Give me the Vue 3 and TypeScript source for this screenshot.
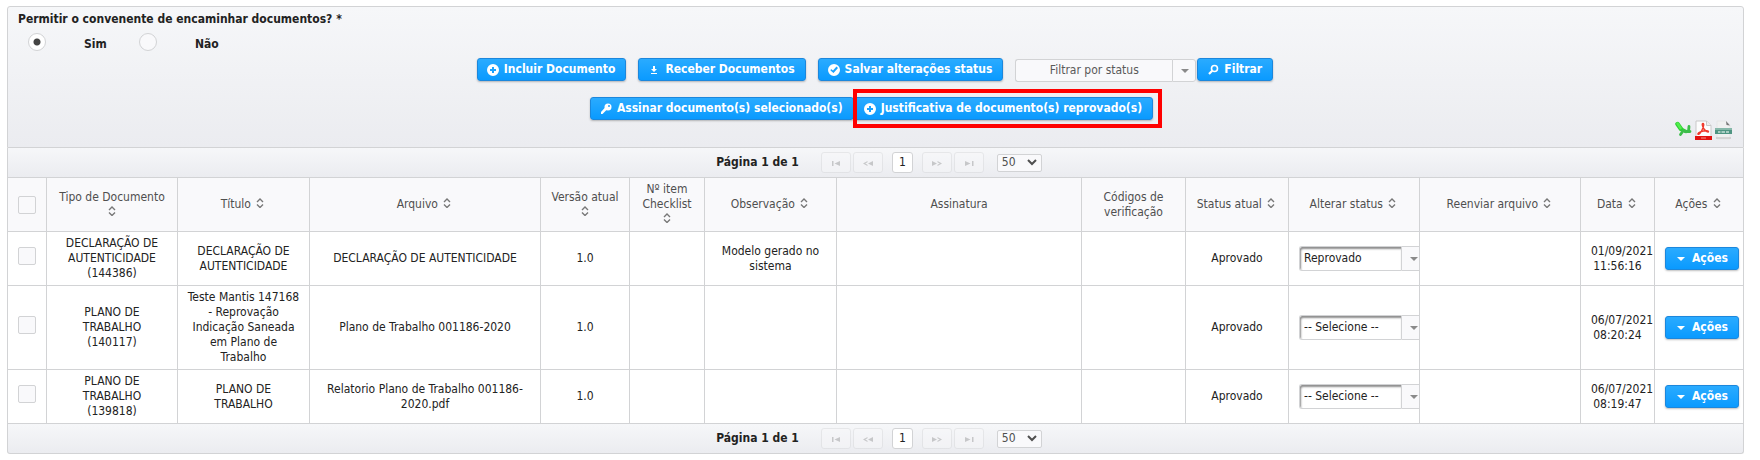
<script setup lang="ts">
import { ref } from 'vue'

interface Column {
  label: string
  width: number
  sortable: boolean
}

interface DocumentRow {
  id: number
  type: string
  title: string
  file: string
  version: string
  note: string
  status: string
  newStatus: string
  date: string
  time: string
}

const columns: Column[] = [
  { label: 'Tipo de Documento', width: 131, sortable: true },
  { label: 'Título', width: 132, sortable: true },
  { label: 'Arquivo', width: 231, sortable: true },
  { label: 'Versão atual', width: 89, sortable: true },
  { label: 'Nº item Checklist', width: 75, sortable: true },
  { label: 'Observação', width: 132, sortable: true },
  { label: 'Assinatura', width: 245, sortable: false },
  { label: 'Códigos de verificação', width: 104, sortable: false },
  { label: 'Status atual', width: 103, sortable: true },
  { label: 'Alterar status', width: 131, sortable: true },
  { label: 'Reenviar arquivo', width: 161, sortable: true },
  { label: 'Data', width: 74, sortable: true },
  { label: 'Ações', width: 89, sortable: true },
]

const rows = ref<DocumentRow[]>([
  {
    id: 144386, type: 'DECLARAÇÃO DE AUTENTICIDADE', title: 'DECLARAÇÃO DE AUTENTICIDADE',
    file: 'DECLARAÇÃO DE AUTENTICIDADE', version: '1.0', note: 'Modelo gerado no sistema',
    status: 'Aprovado', newStatus: 'Reprovado', date: '01/09/2021', time: '11:56:16',
  },
  {
    id: 140117, type: 'PLANO DE TRABALHO', title: 'Teste Mantis 147168 - Reprovação Indicação Saneada em Plano de Trabalho',
    file: 'Plano de Trabalho 001186-2020', version: '1.0', note: '',
    status: 'Aprovado', newStatus: '', date: '06/07/2021', time: '08:20:24',
  },
  {
    id: 139818, type: 'PLANO DE TRABALHO', title: 'PLANO DE TRABALHO',
    file: 'Relatorio Plano de Trabalho 001186-2020.pdf', version: '1.0', note: '',
    status: 'Aprovado', newStatus: '', date: '06/07/2021', time: '08:19:47',
  },
])

const allowForward = ref('sim')
const selected = ref<number[]>([])
const statusFilter = ref('')
const pageSize = ref('50')

const pagerIcons = {
  first: 'M2 6h1.500v5H2zM10 6v5L4.500 8.500z',
  prev: 'M11 6v5L6 8.500zM5.500 6 1 8.500l4.500 2.500V9.700L3.200 8.500l2.300-1.200z',
  next: 'M1 6v5l5-2.500zM6.500 6 11 8.500 6.500 11V9.700l2.300-1.200-2.300-1.200z',
  last: 'M9 6h1.500v5H9zM2 6v5l5.500-2.500z',
}
</script>

<template>
  <main class="panel">
    <header class="head">
      <fieldset class="question">
        <legend>Permitir o convenente de encaminhar documentos? *</legend>
        <div class="options">
          <label class="option"><input v-model="allowForward" type="radio" name="allow" value="sim" /><span>Sim</span></label>
          <label class="option"><input v-model="allowForward" type="radio" name="allow" value="nao" /><span>Não</span></label>
        </div>
      </fieldset>

      <div class="toolbar">
        <button type="button" class="btn">
          <svg class="icon" viewBox="0 0 16 16"><path fill-rule="evenodd" d="M8 2a6 6 0 1 0 0 12A6 6 0 0 0 8 2zM7 5h2v2h2v2H9v2H7V9H5V7h2z" /></svg>
          Incluir Documento
        </button>
        <button type="button" class="btn">
          <svg class="icon" viewBox="0 0 16 16"><path d="M7 4h2v3h2L8 10 5 7h2zM5 11h6v1H5z" /></svg>
          Receber Documentos
        </button>
        <button type="button" class="btn">
          <svg class="icon" viewBox="0 0 16 16"><path fill-rule="evenodd" d="M8 2a6 6 0 1 0 0 12A6 6 0 0 0 8 2zM5 7l2 1.500L10.500 4.500 12 6l-4.500 5L4.500 8.500z" /></svg>
          Salvar alterações status
        </button>
        <div class="filter">
          <div class="combo combo-filter">
            <select v-model="statusFilter" aria-label="Filtrar por status">
              <option value="">Filtrar por status</option>
              <option value="aprovado">Aprovado</option>
              <option value="reprovado">Reprovado</option>
            </select>
            <span class="trigger"><svg viewBox="0 0 8 4"><path d="M0 0h8L4 4z" /></svg></span>
          </div>
          <button type="button" class="btn">
            <svg class="icon" viewBox="0 0 16 16"><g fill="none" stroke="#fff"><circle cx="9.500" cy="6.500" r="3" stroke-width="1.600" /><path d="M7.200 8.800 4 12" stroke-width="2.200" /></g></svg>
            Filtrar
          </button>
        </div>
      </div>

      <div class="toolbar toolbar-second">
        <button type="button" class="btn">
          <svg class="icon" viewBox="0 0 16 16"><circle cx="10" cy="6" r="3.500" /><path d="M7.500 6 3 11v2h1.500l5-5z" /><circle cx="11" cy="5" r="1" fill="#219fff" /></svg>
          Assinar documento(s) selecionado(s)
        </button>
        <span class="highlight">
          <button type="button" class="btn">
            <svg class="icon" viewBox="0 0 16 16"><path fill-rule="evenodd" d="M8 2a6 6 0 1 0 0 12A6 6 0 0 0 8 2zM7 5h2v2h2v2H9v2H7V9H5V7h2z" /></svg>
            Justificativa de documento(s) reprovado(s)
          </button>
        </span>
      </div>

      <div class="exports">
        <a href="#" aria-label="Excel">
          <svg viewBox="0 0 17 20"><g fill="none" stroke-linecap="round"><path d="M2.500 4 6 9" stroke="#2fcf35" stroke-width="4.500" /><path d="m6 9 5 2.500" stroke="#2fcf35" stroke-width="3.500" /><path d="M2.500 3.500 5.500 8" stroke="#52ee4c" stroke-width="2.500" /><path d="M8 11 5.500 14.500M14 6.500l-.5 5M10 11.500h5" stroke="#3cbd4a" stroke-width="2.800" /></g></svg>
        </a>
        <a href="#" aria-label="PDF">
          <svg viewBox="0 0 17 20"><path d="M1 1h10.500L16 5.500V19H1z" fill="#fdfdfd" stroke="#c9c9c9" /><path d="M11.500 1v4.500H16" fill="#eee" stroke="#c9c9c9" /><path d="M8 3.500c1.500 0 .5 3.500-1 6.500s-3 5-4 4.200 3-2.700 5.500-3.200 5-.5 5 .6-3-.4-4.500-2.600S6.500 3.500 8 3.500z" fill="none" stroke="#f03a2c" stroke-width="1.400" /><path d="M0 16h17v4H0z" fill="#e2120f" /><path d="M6 18h5" stroke="#f5938c" /></svg>
        </a>
        <a href="#" aria-label="CSV">
          <svg viewBox="0 0 17 20"><path d="M2 1h9l4 4v14H2z" fill="#f0f0f0" stroke="#dedede" stroke-width=".5" /><path d="m11 1 4 4.500L11.500 5z" fill="#777" /><path d="M0 9.500h17V14H0z" fill="#4f9582" /><path d="M0 8h17v2H0z" fill="#86b8a9" /><path d="M3 12h2.500m1 0H10m1 0h3" stroke="#c6e0d8" stroke-width="1.600" /><path d="M1 18h15" stroke="#bbb" /></svg>
        </a>
      </div>
    </header>

    <nav class="pager" aria-label="Paginação superior">
      <span class="pager-text">Página 1 de 1</span>
      <span class="pager-group">
        <button type="button" disabled aria-label="Primeira"><svg viewBox="0 0 12 15"><path :d="pagerIcons.first" /></svg></button>
        <button type="button" disabled aria-label="Anterior"><svg viewBox="0 0 12 15"><path :d="pagerIcons.prev" /></svg></button>
      </span>
      <button type="button" class="page">1</button>
      <span class="pager-group">
        <button type="button" disabled aria-label="Próxima"><svg viewBox="0 0 12 15"><path :d="pagerIcons.next" /></svg></button>
        <button type="button" disabled aria-label="Última"><svg viewBox="0 0 12 15"><path :d="pagerIcons.last" /></svg></button>
      </span>
      <span class="size">
        <select v-model="pageSize" aria-label="Linhas por página"><option>10</option><option>20</option><option>50</option></select>
        <svg viewBox="0 0 10 7"><path d="m1 1 4 4 4-4" /></svg>
      </span>
    </nav>

    <table>
      <colgroup>
        <col class="col-check" />
        <col v-for="c in columns" :key="c.label" :style="{ width: c.width + 'px' }" />
      </colgroup>
      <thead>
        <tr>
          <th class="fixed"><input type="checkbox" class="check" aria-label="Selecionar todos" /></th>
          <th v-for="c in columns" :key="c.label" scope="col">
            {{ c.label }}
            <svg v-if="c.sortable" class="sort" viewBox="0 0 8 10"><path d="m1 4 3-3 3 3M1 6.500l3 3 3-3" /></svg>
          </th>
        </tr>
      </thead>
      <tbody>
        <tr v-for="r in rows" :key="r.id">
          <td class="fixed"><input v-model="selected" type="checkbox" class="check" :value="r.id" :aria-label="'Selecionar ' + r.id" /></td>
          <td class="fixed">{{ r.type }} ({{ r.id }})</td>
          <td>{{ r.title }}</td>
          <td>{{ r.file }}</td>
          <td>{{ r.version }}</td>
          <td></td>
          <td>{{ r.note }}</td>
          <td></td>
          <td></td>
          <td>{{ r.status }}</td>
          <td class="fixed clip">
            <div class="combo combo-row">
              <select v-model="r.newStatus" :aria-label="'Alterar status de ' + r.id">
                <option value="">-- Selecione --</option>
                <option>Aprovado</option>
                <option>Reprovado</option>
              </select>
              <span class="trigger"><svg viewBox="0 0 8 4"><path d="M0 0h8L4 4z" /></svg></span>
            </div>
          </td>
          <td></td>
          <td class="fixed">{{ r.date }} {{ r.time }}</td>
          <td class="fixed">
            <button type="button" class="btn">
              <svg class="icon" viewBox="0 0 16 16"><path d="M4 6h8l-4 4z" /></svg>
              Ações
            </button>
          </td>
        </tr>
      </tbody>
    </table>

    <nav class="pager pager-bottom" aria-label="Paginação inferior">
      <span class="pager-text">Página 1 de 1</span>
      <span class="pager-group">
        <button type="button" disabled aria-label="Primeira"><svg viewBox="0 0 12 15"><path :d="pagerIcons.first" /></svg></button>
        <button type="button" disabled aria-label="Anterior"><svg viewBox="0 0 12 15"><path :d="pagerIcons.prev" /></svg></button>
      </span>
      <button type="button" class="page">1</button>
      <span class="pager-group">
        <button type="button" disabled aria-label="Próxima"><svg viewBox="0 0 12 15"><path :d="pagerIcons.next" /></svg></button>
        <button type="button" disabled aria-label="Última"><svg viewBox="0 0 12 15"><path :d="pagerIcons.last" /></svg></button>
      </span>
      <span class="size">
        <select v-model="pageSize" aria-label="Linhas por página, rodapé"><option>10</option><option>20</option><option>50</option></select>
        <svg viewBox="0 0 10 7"><path d="m1 1 4 4 4-4" /></svg>
      </span>
    </nav>
  </main>
</template>

<style>
body {
  background: #fff;
}
</style>

<style scoped>
.panel,
.panel * {
  box-sizing: border-box;
}

.panel,
.panel button,
.panel select {
  font-family: "DejaVu Sans Condensed", "Noto Sans", sans-serif;
  font-size: 12px;
  line-height: 15px;
  color: #222;
}

.panel {
  margin: 6px 16px 0 7px;
}

svg {
  display: block;
  flex: none;
}

.head {
  padding: 5px 11px 7px 10px;
  border: 1px solid #d2d3d5;
  border-radius: 3px 3px 0 0;
  background: linear-gradient(#f6f7f9, #ebecf0);
}

.question {
  margin: 0;
  padding: 0;
  border: 0;
  font-weight: 700;
}

.question legend {
  padding: 0;
}

.options {
  display: flex;
  padding: 4px 0 0 10px;
}

.option {
  display: flex;
  width: 111px;
  height: 22px;
}

.option span {
  margin: 6px 0 0 38px;
}

.option input {
  appearance: none;
  width: 18px;
  height: 18px;
  margin: 2px 0 0;
  border: 1px solid #d2d3d5;
  border-radius: 50%;
  background: #f9f9fb;
}

.option input:checked {
  background: radial-gradient(circle, #444 3px, #fff 4px);
}

.toolbar {
  display: flex;
  justify-content: center;
  align-items: flex-start;
  gap: 12px;
  padding-top: 5px;
}

.toolbar-second {
  gap: 0;
  padding: 15px 7px 0 0;
}

.btn {
  display: flex;
  align-items: center;
  gap: 3px;
  height: 23px;
  margin: 0;
  padding: 0 10px 0 7px;
  border: 1px solid #1c87dc;
  border-radius: 3px;
  background: linear-gradient(#2aabff, #0a9aff);
  box-shadow: 0 1px 2px rgba(0, 0, 0, 0.25);
  white-space: nowrap;
}

.panel .btn {
  color: #fff;
  font-weight: 700;
}

.icon {
  width: 16px;
  height: 16px;
  fill: #fff;
}

.filter {
  display: flex;
  gap: 1px;
}

.combo {
  display: flex;
}

.combo select {
  appearance: none;
  flex: 1;
  min-width: 0;
  margin: 0;
  border: 1px solid #d2d3d5;
  border-right: 0;
  border-radius: 3px 0 0 3px;
}

.trigger {
  display: flex;
  align-items: center;
  border: 1px solid #d2d3d5;
  border-radius: 0 3px 3px 0;
  background: #f9f9fb;
}

.trigger svg {
  width: 8px;
  height: 4px;
  fill: #8a8a8a;
}

.combo-filter {
  width: 181px;
  height: 23px;
  margin-top: 1px;
}

.combo-filter select {
  background: #f9f9fb;
  color: #5a5a5a;
  text-align: center;
  text-align-last: center;
}

.combo-filter .trigger {
  width: 24px;
  padding-left: 8px;
}

.combo-row {
  width: 130px;
  height: 25px;
}

.combo-row select {
  padding: 0 4px;
  background: #fff;
  box-shadow: inset 1px 2px 2px #8e8e8e;
}

.combo-row .trigger {
  width: 28px;
  padding-left: 8px;
}

.highlight {
  position: relative;
}

.highlight::after {
  content: "";
  position: absolute;
  inset: -8px -9px -8px -1px;
  border: 4px solid #f00;
  pointer-events: none;
}

.exports {
  display: flex;
  justify-content: flex-end;
  gap: 3px;
}

.exports svg {
  width: 17px;
  height: 20px;
}

.pager {
  display: flex;
  justify-content: center;
  align-items: center;
  height: 29px;
  padding-left: 7px;
  border: solid #d2d3d5;
  border-width: 0 1px;
  background: linear-gradient(#f6f7f9, #ebecf0);
}

.pager-bottom {
  height: 30px;
  border-width: 0 1px 1px;
  border-radius: 0 0 3px 3px;
}

.pager-text {
  margin-right: 22px;
  font-weight: 700;
}

.pager-group {
  display: flex;
  gap: 2px;
}

.pager button {
  display: flex;
  align-items: center;
  justify-content: center;
  width: 30px;
  height: 21px;
  padding: 0;
  border: 1px solid #d2d3d5;
  border-radius: 3px;
  background: #f9f9fb;
}

.pager button:disabled {
  opacity: 0.4;
}

.pager button svg {
  width: 12px;
  height: 15px;
  fill: #8a8a8a;
}

.pager .page {
  width: 21px;
  margin: 0 9px;
  background: #fff;
}

.size {
  display: flex;
  align-items: center;
  justify-content: flex-end;
  width: 45px;
  height: 18px;
  margin-left: 13px;
  border: 1px solid #d2d3d5;
  border-radius: 2px;
  background: #f9f9fb;
}

.size select {
  appearance: none;
  flex: 1;
  min-width: 0;
  padding: 0 4px;
  border: 0;
  background: none;
  color: #4f4f4f;
}

.size svg {
  width: 10px;
  height: 7px;
  margin-right: 4px;
  fill: none;
  stroke: #4f4f4f;
  stroke-width: 2;
}

table {
  width: 100%;
  table-layout: fixed;
  border-collapse: collapse;
}

.col-check {
  width: 39px;
}

th,
td {
  padding: 4px 9px;
  border: 1px solid #d2d3d5;
  text-align: center;
  vertical-align: middle;
}

.fixed {
  padding: 4px 10px;
}

td {
  background: #fff;
}

th {
  height: 54px;
  background: #f9f9fb;
  color: #4f4f4f;
  font-weight: 400;
}

.sort {
  display: inline-block;
  width: 8px;
  height: 10px;
  margin: 0 2px;
  fill: none;
  stroke: #777;
  stroke-width: 1.4;
}

.check {
  appearance: none;
  display: block;
  width: 18px;
  height: 18px;
  margin: 0;
  border: 1px solid #d2d3d5;
  border-radius: 2px;
  background: #f9f9fb;
}

td .check {
  margin-bottom: 5px;
}

.clip {
  overflow: hidden;
}
</style>
